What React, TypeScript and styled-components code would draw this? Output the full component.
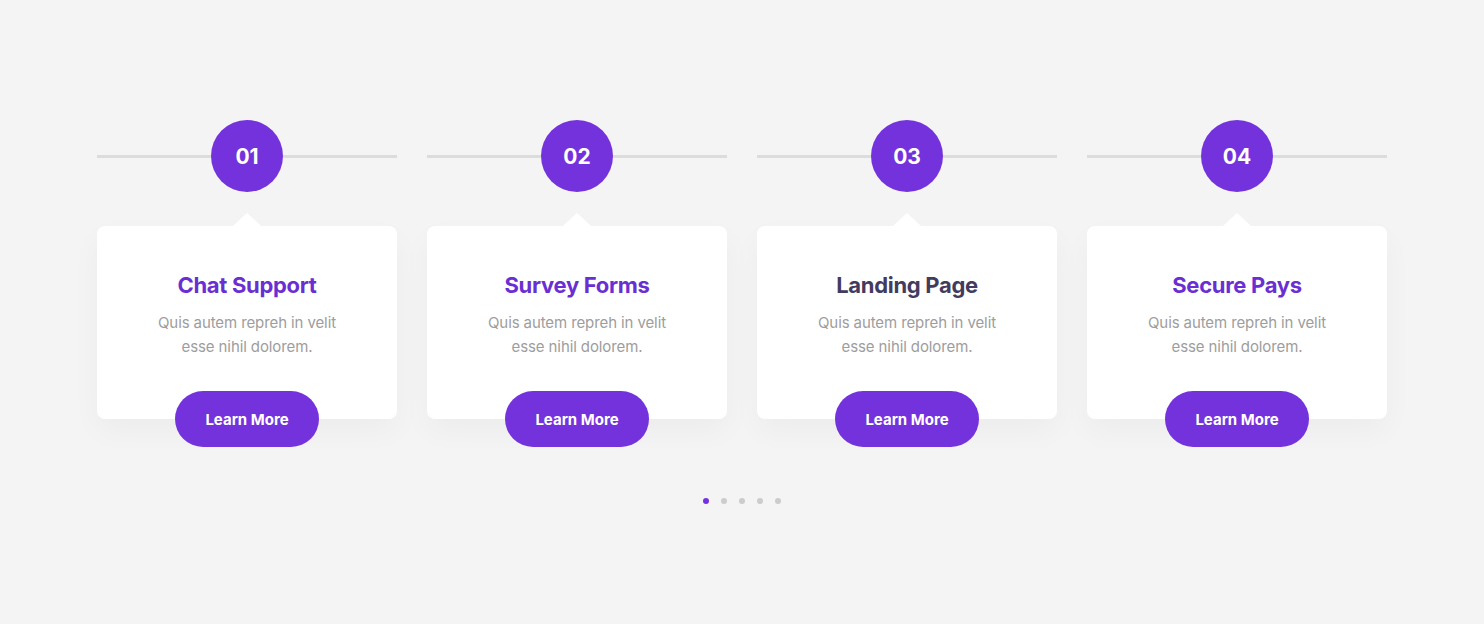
import styled, { createGlobalStyle } from "styled-components";

const GlobalStyle = createGlobalStyle`
  html, body {
    margin: 0;
    padding: 0;
    background: #f4f4f4;
    font-family: Inter, "Noto Sans", "Liberation Sans", sans-serif;
  }
`;

const Page = styled.div`
  width: 100%;
  min-height: 624px;
  background: #f4f4f4;
  display: flex;
  flex-direction: column;
  align-items: center;
  padding-top: 120px;
  box-sizing: border-box;
`;

const Row = styled.div`
  display: flex;
  gap: 30px;
`;

const Column = styled.div`
  width: 300px;
  display: flex;
  flex-direction: column;
  align-items: center;
`;

const Header = styled.div`
  width: 100%;
  height: 72px;
  display: flex;
  align-items: center;
`;

const Line = styled.div`
  flex: 1;
  height: 3px;
  background: #dcdcdc;
`;

const Circle = styled.div`
  width: 72px;
  height: 72px;
  border-radius: 50%;
  background: #7432dd;
  color: #fff;
  font-size: 21px;
  font-weight: 700;
  display: flex;
  align-items: center;
  justify-content: center;
`;

const Card = styled.div`
  position: relative;
  margin-top: 34px;
  width: 100%;
  background: #fff;
  border-radius: 8px;
  box-shadow: 0 12px 30px rgba(0, 0, 0, 0.035);
  display: flex;
  flex-direction: column;
  align-items: center;
  padding-top: 44px;
  box-sizing: border-box;

  &::before {
    content: "";
    position: absolute;
    top: -13px;
    left: 50%;
    margin-left: -14px;
    border-left: 14px solid transparent;
    border-right: 14px solid transparent;
    border-bottom: 13px solid #fff;
  }
`;

const Title = styled.h3<{ $dark?: boolean }>`
  margin: 0;
  font-size: 22px;
  line-height: 30px;
  font-weight: 700;
  letter-spacing: -0.3px;
  color: ${(p) => (p.$dark ? "#433b5e" : "#6a2fd2")};
`;

const Desc = styled.p`
  margin: 11px 0 0;
  width: 190px;
  text-align: center;
  font-size: 15px;
  line-height: 24px;
  letter-spacing: -0.1px;
  color: #9d9d9d;
`;

const Button = styled.button`
  margin-top: 32px;
  margin-bottom: -28px;
  width: 144px;
  height: 56px;
  border: none;
  border-radius: 28px;
  background: #7432dd;
  color: #fff;
  font-family: inherit;
  font-size: 15px;
  font-weight: 700;
  cursor: pointer;
`;

const Dots = styled.div`
  margin-top: 79px;
  display: flex;
  gap: 12px;
`;

const Dot = styled.span<{ $active?: boolean }>`
  width: 6px;
  height: 6px;
  border-radius: 50%;
  background: ${(p) => (p.$active ? "#7432dd" : "#cccccc")};
`;

const steps = [
  { num: "01", title: "Chat Support" },
  { num: "02", title: "Survey Forms" },
  { num: "03", title: "Landing Page", dark: true },
  { num: "04", title: "Secure Pays" },
];

export default function App() {
  return (
    <>
      <GlobalStyle />
      <Page>
        <Row>
          {steps.map((s) => (
            <Column key={s.num}>
              <Header>
                <Line />
                <Circle>{s.num}</Circle>
                <Line />
              </Header>
              <Card>
                <Title $dark={s.dark}>{s.title}</Title>
                <Desc>Quis autem repreh in velit esse nihil dolorem.</Desc>
                <Button>Learn More</Button>
              </Card>
            </Column>
          ))}
        </Row>
        <Dots>
          {[0, 1, 2, 3, 4].map((i) => (
            <Dot key={i} $active={i === 0} />
          ))}
        </Dots>
      </Page>
    </>
  );
}
